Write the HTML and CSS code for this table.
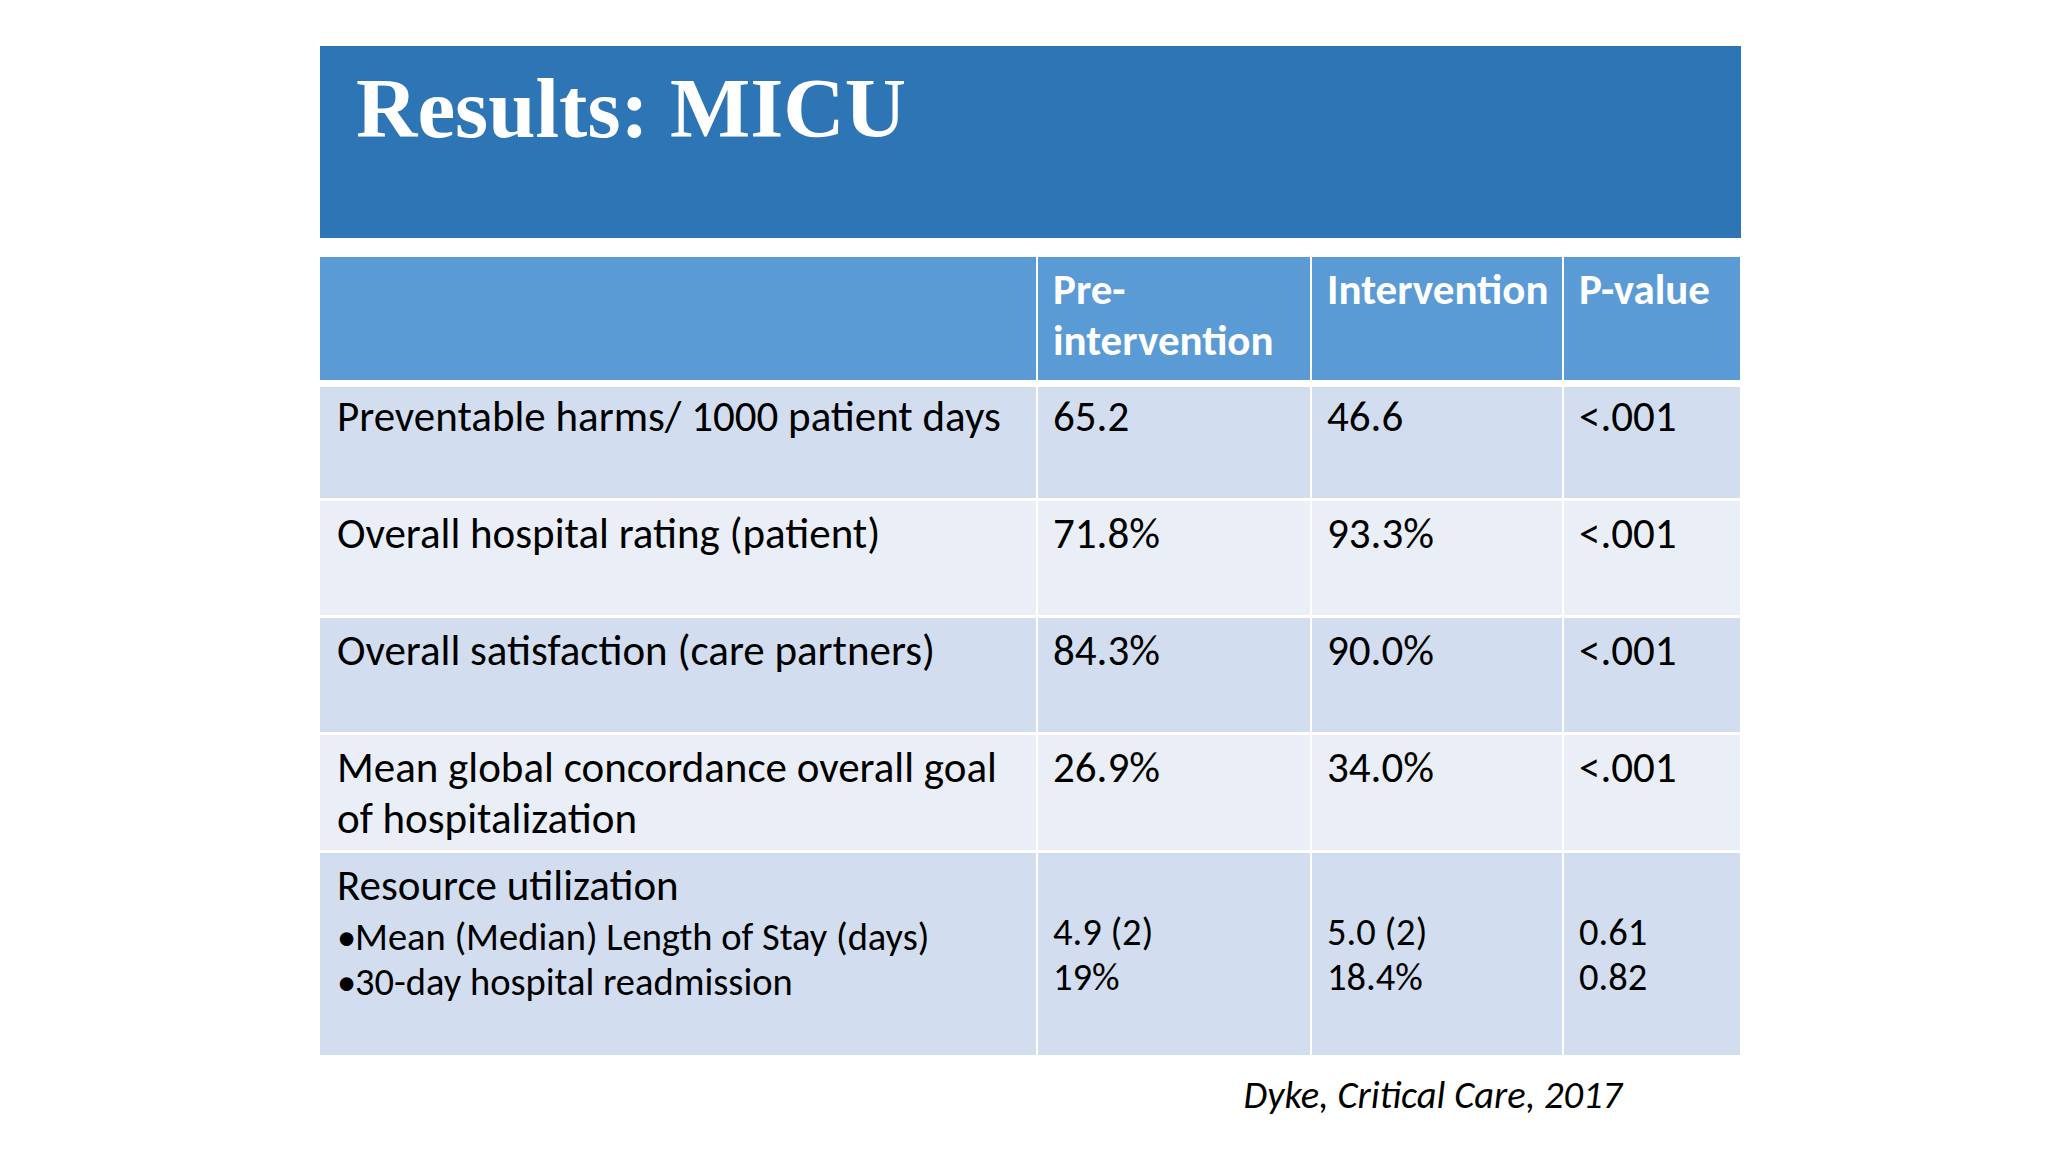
FILE: index.html
```html
<!DOCTYPE html>
<html lang="en">
<head>
<meta charset="utf-8">
<title>Results: MICU</title>
<link rel="stylesheet" href="styles.css">
</head>
<body>
<div class="slide">
  <header class="title-bar">
    <h1 class="title">Results: MICU</h1>
  </header>
  <table class="results">
    <colgroup>
      <col class="c1"><col class="c2"><col class="c3"><col class="c4">
    </colgroup>
    <thead>
      <tr class="head">
        <th></th>
        <th>Pre-<br>intervention</th>
        <th>Intervention</th>
        <th>P-value</th>
      </tr>
    </thead>
    <tbody>
      <tr class="r1 odd">
        <td>Preventable harms/ 1000 patient days</td>
        <td>65.2</td>
        <td>46.6</td>
        <td>&lt;.001</td>
      </tr>
      <tr class="r2 even">
        <td>Overall hospital rating (patient)</td>
        <td>71.8%</td>
        <td>93.3%</td>
        <td>&lt;.001</td>
      </tr>
      <tr class="r3 odd">
        <td>Overall satisfaction (care partners)</td>
        <td>84.3%</td>
        <td>90.0%</td>
        <td>&lt;.001</td>
      </tr>
      <tr class="r4 even">
        <td>Mean global concordance overall goal of hospitalization</td>
        <td>26.9%</td>
        <td>34.0%</td>
        <td>&lt;.001</td>
      </tr>
      <tr class="r5 odd">
        <td>
          <div class="lead">Resource utilization</div>
          <div class="bullet"><span class="dot">•</span><span>Mean (Median) Length of Stay (days)</span></div>
          <div class="bullet"><span class="dot">•</span><span>30-day hospital readmission</span></div>
        </td>
        <td class="sub"><div>4.9 (2)</div><div>19%</div></td>
        <td class="sub"><div>5.0 (2)</div><div>18.4%</div></td>
        <td class="sub"><div>0.61</div><div>0.82</div></td>
      </tr>
    </tbody>
  </table>
  <p class="cite">Dyke, Critical Care, 2017</p>
</div>
</body>
</html>
```

FILE: styles.css
```css
html, body {
  margin: 0;
  padding: 0;
  background: #ffffff;
}

.slide {
  width: 2048px;
  height: 1152px;
  box-sizing: border-box;
  padding: 46px 0 0 320px;
  font-family: Carlito, Calibri, Lato, "Liberation Sans", sans-serif;
  color: #000000;
}

.title-bar {
  width: 1421px;
  height: 192px;
  box-sizing: border-box;
  background: #2e75b6;
  padding: 20px 0 0 36px;
}

.title {
  margin: 0;
  font-family: "Liberation Serif", "Times New Roman", serif;
  font-weight: bold;
  font-size: 85px;
  line-height: 1;
  color: #ffffff;
}

.results {
  margin-top: 19px;
  width: 1420px;
  border-collapse: separate;
  border-spacing: 0;
  table-layout: fixed;
  font-size: 43px;
  line-height: 51px;
}

.c1 { width: 716px; }
.c2 { width: 274px; }
.c3 { width: 252px; }
.c4 { width: 178px; }

.results th,
.results td {
  box-sizing: border-box;
  vertical-align: top;
  text-align: left;
  padding: 7px 8px 0 15px;
  border-left: 2px solid #ffffff;
}

.results th:first-child,
.results td:first-child {
  border-left: 0;
  padding-left: 17px;
  padding-right: 30px;
}

.results th {
  background: #5b9bd5;
  color: #ffffff;
  font-weight: bold;
  height: 123px;
}

.results td {
  border-top: 3px solid #ffffff;
}

.odd td { background: #d2deef; }
.even td { background: #eaeff7; }

.results .r1 td { border-top-width: 7px; height: 118px; padding-top: 4px; }
.r2 td { height: 117px; }
.r3 td { height: 117px; }
.r4 td { height: 118px; }
.r5 td { height: 205px; }

.lead {
  line-height: 51px;
  margin-bottom: 3px;
}

.bullet {
  display: flex;
  font-size: 38.5px;
  line-height: 45px;
}

.dot {
  width: 18px;
  flex: none;
}

.results td.sub {
  font-size: 38.5px;
  line-height: 45px;
  padding-top: 56px;
}

.cite {
  margin: 17px 0 0 0;
  width: 1302px;
  text-align: right;
  font-style: italic;
  font-size: 38.5px;
  line-height: 45px;
}
```
